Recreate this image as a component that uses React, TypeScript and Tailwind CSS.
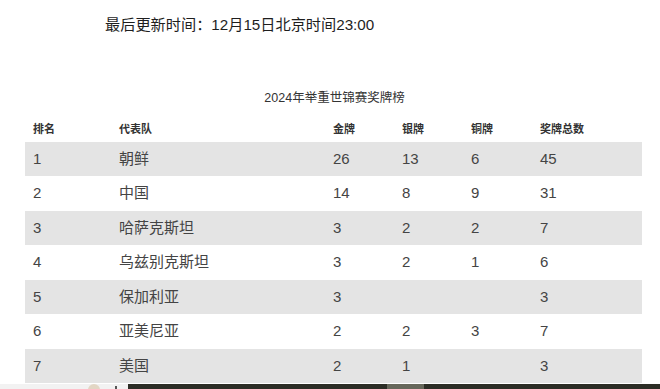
import React from "react";

const rows: [string, string, string, string, string, string][] = [
  ["1", "朝鲜", "26", "13", "6", "45"],
  ["2", "中国", "14", "8", "9", "31"],
  ["3", "哈萨克斯坦", "3", "2", "2", "7"],
  ["4", "乌兹别克斯坦", "3", "2", "1", "6"],
  ["5", "保加利亚", "3", "", "", "3"],
  ["6", "亚美尼亚", "2", "2", "3", "7"],
  ["7", "美国", "2", "1", "", "3"],
];

const headers = ["排名", "代表队", "金牌", "银牌", "铜牌", "奖牌总数"];

const font = {
  fontFamily: '"Liberation Sans", Arial, "Noto Sans CJK SC", sans-serif',
};

export default function App() {
  return (
    <div className="w-[660px] h-[389px] overflow-hidden bg-white text-[#333]" style={font}>
      <div className="h-[50px] pt-[15px] pl-[105px]">
        <div className="text-[15.2px] leading-[20px] text-[#1e1e1e]">最后更新时间：12月15日北京时间23:00</div>
      </div>
      <div className="h-[66px] pt-[39px] flex justify-center">
        <div className="text-[12.5px] leading-[18px] text-[#333] pl-[9px]">2024年举重世锦赛奖牌榜</div>
      </div>
      <div className="mx-[25px] w-[617px]">
        <div className="grid grid-cols-[86px_214px_69px_69px_69px_1fr] h-[26px] items-center text-[11px] font-bold text-[#333]">
          {headers.map((h) => (
            <div key={h} className="pl-2">{h}</div>
          ))}
        </div>
        {rows.map((r, i) => (
          <div
            key={i}
            className={`grid grid-cols-[86px_214px_69px_69px_69px_1fr] items-center text-[15px] text-[#444] ${
              i % 2 === 0 ? "bg-[#e4e4e4] h-[34px]" : "bg-white h-[35px]"
            }`}
          >
            {r.map((c, j) => (
              <div key={j} className="pl-2">{c}</div>
            ))}
          </div>
        ))}
      </div>
      <div className="mt-[1px] flex h-[6px]">
        <div className="w-[128px] bg-[#f2f2f2] relative">
          <div className="absolute left-[88px] top-0 w-[12px] h-[6px] bg-[#e2d6c4] rounded-t-full" />
          <div className="absolute left-[115px] top-[2px] w-[2px] h-[3px] bg-[#555]" />
        </div>
        <div className="flex-1 bg-[#2c2d25] flex">
          <div className="w-[259px]" />
          <div className="w-[37px] bg-[#66675a]" />
        </div>
      </div>
    </div>
  );
}
